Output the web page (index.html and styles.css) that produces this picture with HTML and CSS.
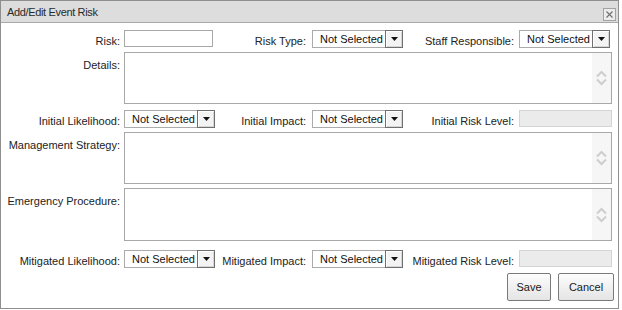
FILE: index.html
```html
<!DOCTYPE html>
<html lang="en">
<head>
<meta charset="utf-8">
<title>Add/Edit Event Risk</title>
<link rel="stylesheet" href="styles.css">
</head>
<body>
<div class="dialog">
  <div class="titlebar">
    <span class="title">Add/Edit Event Risk</span>
    <button class="close" type="button" aria-label="Close">
      <svg width="7" height="7" viewBox="0 0 7 7"><path d="M0.5 0.5 L6.5 6.5 M6.5 0.5 L0.5 6.5" stroke="#6f6f6f" stroke-width="1.1" fill="none"/></svg>
    </button>
  </div>
  <form class="form">
    <div class="grid">
      <label class="lbl l1">Risk:</label>
      <input class="txt" type="text">
      <label class="lbl l3">Risk Type:</label>
      <div class="sel"><span class="val">Not Selected</span><span class="arrow"><svg width="7" height="4" viewBox="0 0 7 4"><path d="M0 0 H7 L3.5 4 Z" fill="#111"/></svg></span></div>
      <label class="lbl l5">Staff Responsible:</label>
      <div class="sel"><span class="val">Not Selected</span><span class="arrow"><svg width="7" height="4" viewBox="0 0 7 4"><path d="M0 0 H7 L3.5 4 Z" fill="#111"/></svg></span></div>

      <label class="lbl l1 top">Details:</label>
      <div class="area"><textarea></textarea><span class="scroll"><svg width="11" height="18" viewBox="0 0 11 18"><path d="M1 7.5 L5.5 3 L10 7.5 M1 10.5 L5.5 15 L10 10.5" stroke="#cdcdcd" stroke-width="2" fill="none"/></svg></span></div>

      <label class="lbl l1">Initial Likelihood:</label>
      <div class="sel"><span class="val">Not Selected</span><span class="arrow"><svg width="7" height="4" viewBox="0 0 7 4"><path d="M0 0 H7 L3.5 4 Z" fill="#111"/></svg></span></div>
      <label class="lbl l3">Initial Impact:</label>
      <div class="sel"><span class="val">Not Selected</span><span class="arrow"><svg width="7" height="4" viewBox="0 0 7 4"><path d="M0 0 H7 L3.5 4 Z" fill="#111"/></svg></span></div>
      <label class="lbl l5">Initial Risk Level:</label>
      <input class="ro" type="text" disabled>

      <label class="lbl l1 top">Management Strategy:</label>
      <div class="area"><textarea></textarea><span class="scroll"><svg width="11" height="18" viewBox="0 0 11 18"><path d="M1 7.5 L5.5 3 L10 7.5 M1 10.5 L5.5 15 L10 10.5" stroke="#cdcdcd" stroke-width="2" fill="none"/></svg></span></div>

      <label class="lbl l1 top">Emergency Procedure:</label>
      <div class="area tall"><textarea></textarea><span class="scroll"><svg width="11" height="18" viewBox="0 0 11 18"><path d="M1 7.5 L5.5 3 L10 7.5 M1 10.5 L5.5 15 L10 10.5" stroke="#cdcdcd" stroke-width="2" fill="none"/></svg></span></div>

      <label class="lbl l1">Mitigated Likelihood:</label>
      <div class="sel"><span class="val">Not Selected</span><span class="arrow"><svg width="7" height="4" viewBox="0 0 7 4"><path d="M0 0 H7 L3.5 4 Z" fill="#111"/></svg></span></div>
      <label class="lbl l3">Mitigated Impact:</label>
      <div class="sel"><span class="val">Not Selected</span><span class="arrow"><svg width="7" height="4" viewBox="0 0 7 4"><path d="M0 0 H7 L3.5 4 Z" fill="#111"/></svg></span></div>
      <label class="lbl l5">Mitigated Risk Level:</label>
      <input class="ro" type="text" disabled>
    </div>
    <div class="actions">
      <button class="btn save" type="button">Save</button>
      <button class="btn cancel" type="button">Cancel</button>
    </div>
  </form>
</div>
</body>
</html>
```

FILE: styles.css
```css
html, body {
  margin: 0;
  padding: 0;
  background: #ffffff;
}

body {
  font-family: "Liberation Sans", Arial, sans-serif;
  font-size: 11px;
  color: #222222;
}

.dialog {
  width: 619px;
  height: 309px;
  box-sizing: border-box;
  border: 1px solid #8e8e8e;
  display: flex;
  flex-direction: column;
  background: #ffffff;
}

.titlebar {
  height: 22px;
  box-sizing: border-box;
  background: #dddddd;
  border-bottom: 1px solid #a9a9a9;
  display: flex;
  justify-content: space-between;
  align-items: flex-start;
  padding: 0 2px 0 6px;
}

.title {
  font-size: 11px;
  line-height: 20px;
  padding-top: 1px;
  color: #2a2a2a;
  letter-spacing: -0.35px;
}

.close {
  width: 13px;
  height: 13px;
  margin: 7px 0 0 0;
  padding: 0;
  box-sizing: border-box;
  border: 1px solid #a2a2a2;
  background: #ececec;
  display: flex;
  align-items: center;
  justify-content: center;
}

.close svg {
  display: block;
}

.form {
  margin: 0;
  padding-top: 7px;
  display: flex;
  flex-direction: column;
}

.grid {
  display: grid;
  grid-template-columns: 123px 91px 97px 91px 116px 93px;
  grid-template-rows: 22px 58px 22px 56px 62px 23px;
  align-items: start;
}

.lbl {
  text-align: right;
  line-height: 18px;
  padding-top: 2px;
  white-space: nowrap;
}

.lbl.top {
  padding-top: 4px;
}

.l1 { padding-right: 4px; }
.l3 { padding-right: 6px; }
.l5 { padding-right: 5px; }

.txt {
  width: 89px;
  height: 17px;
  box-sizing: border-box;
  margin: 0;
  padding: 0 3px;
  border: 1px solid #a8a8a8;
  background: #ffffff;
  font: inherit;
}

.ro {
  width: 93px;
  height: 17px;
  box-sizing: border-box;
  margin: 0;
  padding: 0 3px;
  border: 1px solid #d4d4d4;
  background: #ebebeb;
  font: inherit;
}

.sel {
  width: 91px;
  height: 18px;
  box-sizing: border-box;
  border: 1px solid #ababab;
  display: flex;
  background: #ffffff;
}

.val {
  flex: 1;
  padding-left: 7px;
  line-height: 16px;
  color: #111111;
  white-space: nowrap;
  overflow: hidden;
}

.arrow {
  width: 18px;
  height: 18px;
  box-sizing: border-box;
  margin: -1px -1px -1px 0;
  border: 1px solid #6f6f6f;
  background: #f3f3f3;
  box-shadow: inset 1px 1px 0 #ffffff, inset -1px -1px 0 #d6d6d6;
  display: flex;
  align-items: center;
  justify-content: center;
}

.arrow svg {
  display: block;
}

.area {
  grid-column: 2 / 7;
  height: 52px;
  box-sizing: border-box;
  border: 1px solid #a8a8a8;
  display: flex;
  background: #ffffff;
}

.area.tall {
  height: 53px;
}

.area textarea {
  flex: 1;
  border: 0;
  margin: 0;
  padding: 2px;
  resize: none;
  outline: none;
  font: inherit;
  overflow: hidden;
}

.scroll {
  width: 19px;
  background: #f6f6f6;
  display: flex;
  align-items: center;
  justify-content: center;
}

.scroll svg {
  display: block;
}

.actions {
  display: flex;
  justify-content: flex-end;
  gap: 7px;
  padding-right: 4px;
}

.btn {
  height: 28px;
  box-sizing: border-box;
  margin: 0;
  padding: 0;
  border: 1px solid #7a7a7a;
  border-radius: 2px;
  background: linear-gradient(#fdfdfd, #e4e4e4);
  font: inherit;
  color: #1a1a1a;
}

.save { width: 44px; }
.cancel { width: 56px; }
```
